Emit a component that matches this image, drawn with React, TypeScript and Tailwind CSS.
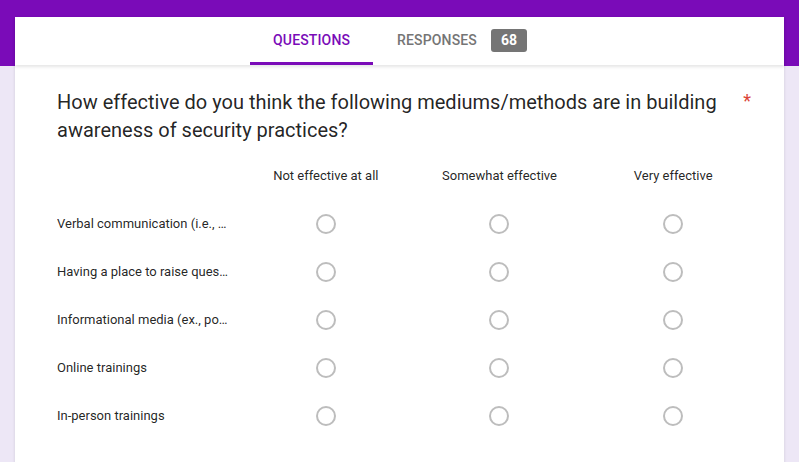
import React from "react";

const columns = ["Not effective at all", "Somewhat effective", "Very effective"];

const rows = [
  "Verbal communication (i.e., in meetings)",
  "Having a place to raise questions",
  "Informational media (ex., posters)",
  "Online trainings",
  "In-person trainings",
];

function Radio() {
  return (
    <div className="h-[20px] w-[20px] rounded-full border-2 border-[#bdbdbd] bg-white" />
  );
}

export default function App() {
  return (
    <main
      className="min-h-[462px] bg-[#ede7f6] text-[rgba(0,0,0,0.87)]"
      style={{ fontFamily: "Roboto, 'Liberation Sans', sans-serif" }}
    >
      <div className="h-[66px] bg-[#7a0bb8]" />

      <div className="mx-[15px] -mt-[49px] bg-white shadow-[0_1px_3px_rgba(0,0,0,0.12)]">
        {/* tabs */}
        <div className="relative z-10 flex h-[48px] justify-center pl-[4px] shadow-[0_2px_3px_rgba(0,0,0,0.1)]">
          <div className="flex w-[123px] flex-col items-center">
            <div className="flex flex-1 items-center pt-[2px] text-[14px] font-medium tracking-[0.01em] text-[#7a0bb8]">
              QUESTIONS
            </div>
            <div className="h-[3px] w-full bg-[#7a0bb8]" />
          </div>
          <div className="flex items-center pl-[24px] pr-[26px] pt-[2px] pb-[3px]">
            <span className="text-[14px] font-medium tracking-[0.01em] text-[#757575]">
              RESPONSES
            </span>
            <span className="ml-[14px] flex h-[23px] w-[36px] items-center justify-center rounded-[3px] bg-[#757575] text-[14px] font-bold text-white">
              68
            </span>
          </div>
        </div>

        {/* question */}
        <div className="pl-[42px] pr-[24px] pt-[23px] pb-[24px]">
          <div className="flex items-start">
            <h1 className="flex-1 pr-[24px] text-[20px] leading-[28px]">
              How effective do you think the following mediums/methods are in building awareness of security practices?
            </h1>
            <span className="mr-[9px] mt-[-1px] text-[18px] leading-[28px] text-[#db4437]">*</span>
          </div>

          <div className="mt-[8px] grid grid-cols-[182px_1fr_1fr_1fr]">
            <div className="h-[48px]" />
            {columns.map((c) => (
              <div key={c} className="flex h-[48px] items-center justify-center text-[13px]">
                {c}
              </div>
            ))}
            {rows.map((r) => (
              <React.Fragment key={r}>
                <div className="flex h-[48px] items-center pr-[10px] text-[13px]">
                  <span className="block truncate">{r}</span>
                </div>
                {columns.map((c) => (
                  <div key={c} className="flex h-[48px] items-center justify-center">
                    <Radio />
                  </div>
                ))}
              </React.Fragment>
            ))}
          </div>
        </div>
      </div>
    </main>
  );
}
